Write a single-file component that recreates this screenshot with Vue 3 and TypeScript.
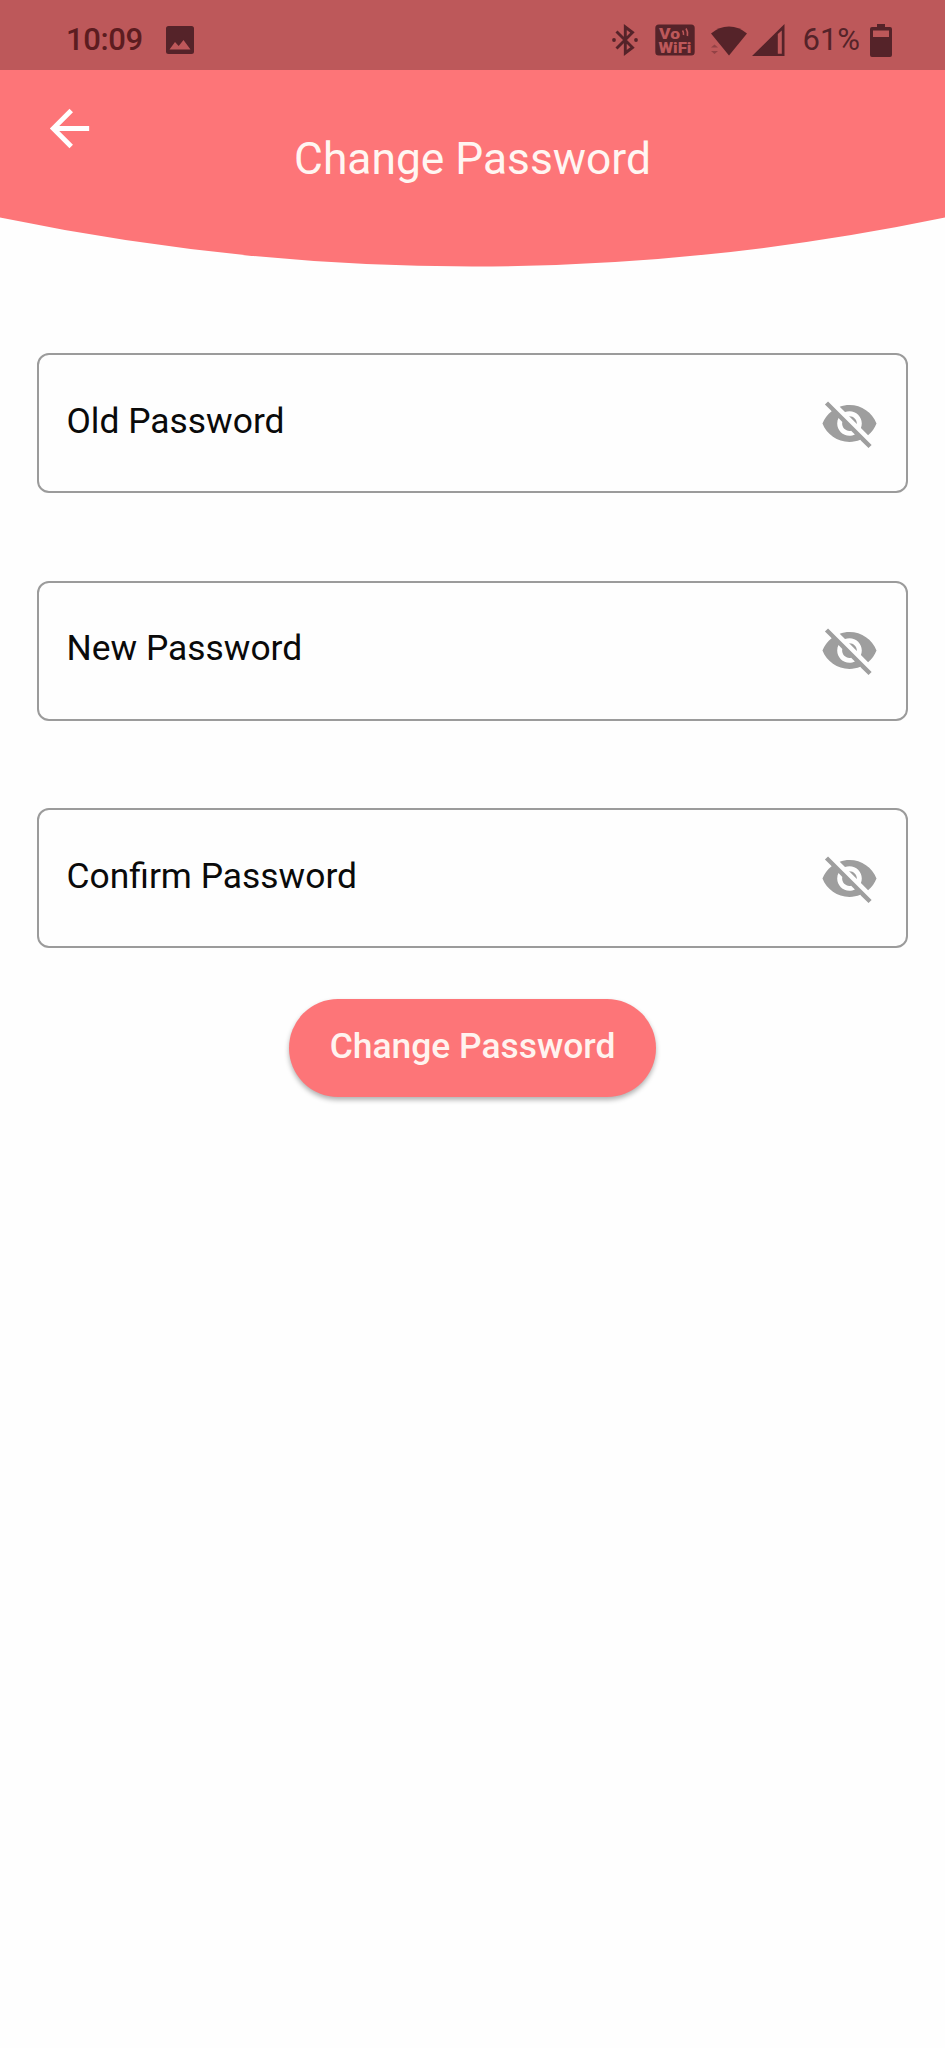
<script setup lang="ts">
import { ref } from 'vue'

interface PasswordField {
  id: string
  label: string
}

const fields = ref<PasswordField[]>([
  { id: 'old', label: 'Old Password' },
  { id: 'new', label: 'New Password' },
  { id: 'confirm', label: 'Confirm Password' },
])
</script>

<template>
  <main class="screen">
    <div class="status">
      <span class="time">10:09</span>
      <svg class="picture" viewBox="0 0 28 28">
        <path fill-rule="evenodd" d="M2.5 0H25.5Q28 0 28 2.5V25.5Q28 28 25.5 28H2.5Q0 28 0 25.5V2.5Q0 0 2.5 0ZM3.5 23.5H24.5L17.5 14L12.7 20L9 16Z" />
      </svg>
      <svg class="bluetooth" viewBox="0 0 26 32">
        <path class="line" d="M4.5 7.5L20.5 23.5L13.3 29V3L20.5 8.5L4.5 24.5" />
        <circle cx="2" cy="16" r="1.9" />
        <circle cx="24" cy="16" r="1.9" />
      </svg>
      <svg class="vowifi" viewBox="0 0 40 32">
        <rect x="0.3" y="0.5" width="39.4" height="31" rx="3.5" />
        <text x="4" y="14.5" font-size="15" textLength="21" lengthAdjust="spacingAndGlyphs">Vo</text>
        <text x="3.5" y="28.7" font-size="15.5" textLength="33" lengthAdjust="spacingAndGlyphs">WiFi</text>
        <path class="wave" d="M27.5 6.5Q29 8.5 28.5 11M31 4.5Q33.3 8 32.4 12" />
      </svg>
      <svg class="wifi" viewBox="0 0 36 30">
        <path d="M18 29.5L0 7.5Q8 0.5 18 0.5T36 7.5Z" />
        <path class="faint" d="M0 21.5L3.5 18.5L7 21.5ZM0 25L3.5 28L7 25Z" />
      </svg>
      <svg class="signal" viewBox="0 0 33 32">
        <path fill-rule="evenodd" d="M0 32L32.5 0V32ZM25.8 10V29.8H29.8V6.5Z" />
      </svg>
      <span class="percent">61%</span>
      <svg class="battery" viewBox="0 0 22 33">
        <path fill-rule="evenodd" d="M7 0H15V3H20Q22 3 22 5V31Q22 33 20 33H2Q0 33 0 31V5Q0 3 2 3H7ZM3 6.5V13H19V6.5Z" />
      </svg>
    </div>

    <header class="header">
      <svg class="curve" viewBox="0 0 945 197" preserveAspectRatio="none">
        <path d="M0 0H945V147.6Q472.5 245.4 0 147.6Z" />
      </svg>
      <button class="back" type="button" aria-label="Back">
        <svg viewBox="0 0 24 24">
          <path d="M20 11H7.83l5.59-5.59L12 4l-8 8 8 8 1.41-1.41L7.83 13H20v-2z" />
        </svg>
      </button>
      <h1 class="title">Change Password</h1>
    </header>

    <form class="form" @submit.prevent>
      <div v-for="field in fields" :key="field.id" class="field">
        <span class="label">{{ field.label }}</span>
        <svg class="eye" viewBox="0 0 24 24">
          <path d="M12 7c2.76 0 5 2.24 5 5 0 .65-.13 1.26-.36 1.83l2.92 2.92c1.51-1.26 2.7-2.89 3.43-4.75-1.73-4.39-6-7.5-11-7.5-1.4 0-2.74.25-3.98.7l2.16 2.16C10.74 7.13 11.35 7 12 7zM2 4.27l2.28 2.28.46.46C3.08 8.3 1.78 10.02 1 12c1.73 4.39 6 7.5 11 7.5 1.55 0 3.03-.3 4.38-.84l.42.42L19.73 22 21 20.73 3.27 3 2 4.27zM7.53 9.8l1.55 1.55c-.05.21-.08.43-.08.65 0 1.66 1.34 3 3 3 .22 0 .44-.03.65-.08l1.55 1.55c-.67.33-1.41.53-2.2.53-2.76 0-5-2.24-5-5 0-.79.2-1.53.53-2.2zm4.31-.78l3.15 3.15.02-.16c0-1.66-1.34-3-3-3l-.17.01z" />
        </svg>
      </div>
      <button class="submit" type="submit">Change Password</button>
    </form>
  </main>
</template>

<style>
body {
  margin: 0;
  background: #fefefe;
}
</style>

<style scoped>
.screen {
  width: 945px;
  height: 2048px;
  overflow: hidden;
  background: #fefefe;
  font-family: Roboto, "Liberation Sans", sans-serif;
}

svg {
  display: block;
  flex: none;
}

.status {
  box-sizing: border-box;
  display: flex;
  align-items: flex-start;
  height: 70px;
  padding: 24px 0 0 66px;
  background: #bd585a;
  color: #552329;
  fill: #552329;
}

.time,
.percent {
  font-size: 31px;
  line-height: 32px;
  white-space: nowrap;
}

.time {
  width: 100px;
  color: #5c1c20;
  font-weight: 500;
  letter-spacing: -0.4px;
}

.picture {
  width: 28px;
  height: 28px;
  margin-top: 2px;
}

.bluetooth {
  width: 26px;
  height: 32px;
  margin-left: 417.5px;
}

.line {
  fill: none;
  stroke: #552329;
  stroke-width: 2.9;
}

.vowifi {
  width: 40px;
  height: 32px;
  margin-left: 17px;
}

.vowifi text {
  fill: #bd585a;
  font-weight: 900;
}

.wave {
  fill: none;
  stroke: #bd585a;
  stroke-width: 1.6;
}

.wifi {
  width: 36px;
  height: 30px;
  margin: 2px 0 0 16px;
}

.faint {
  opacity: 0.4;
}

.signal {
  width: 33px;
  height: 32px;
  margin-left: 5px;
}

.percent {
  width: 67px;
  margin-left: 18px;
}

.battery {
  width: 22px;
  height: 33px;
}

.header {
  display: grid;
  grid-template-columns: 1fr;
  height: 197px;
}

.header > * {
  grid-area: 1 / 1;
}

.curve {
  width: 945px;
  height: 197px;
  fill: #fd7578;
}

.back {
  width: 59px;
  height: 59px;
  margin: 29px 0 0 39.5px;
  padding: 0;
  border: 0;
  background: none;
  fill: #fff;
}

.title {
  height: 52px;
  margin: 63px 0 0;
  color: #fff6f2;
  font-size: 44.3px;
  font-weight: 400;
  line-height: 52px;
  text-align: center;
}

.form {
  display: flex;
  flex-direction: column;
  align-items: center;
  gap: 87.5px;
  padding-top: 86px;
}

.field {
  box-sizing: border-box;
  display: flex;
  align-items: center;
  justify-content: space-between;
  width: 871px;
  height: 140px;
  padding: 0 27.5px;
  border: 2px solid #9b9b9b;
  border-radius: 12px;
}

.label {
  margin-top: -5px;
  color: #0a0a0a;
  font-size: 35.4px;
  line-height: 42px;
}

.eye {
  width: 59px;
  height: 59px;
  fill: #9e9e9e;
}

.submit {
  width: 367px;
  height: 98px;
  margin-top: -37px;
  padding: 0 0 3px;
  border: 0;
  border-radius: 49px;
  background: #fd7578;
  box-shadow: 0 3px 5px rgba(0, 0, 0, 0.3);
  color: #fff3ef;
  font: 500 35.4px/42px Roboto, "Liberation Sans", sans-serif;
}
</style>
